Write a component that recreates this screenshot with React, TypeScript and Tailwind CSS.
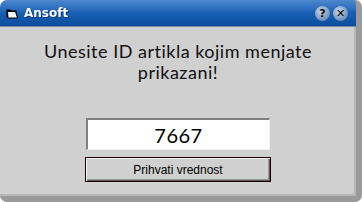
import React from "react";

function FolderIcon() {
  return (
    <svg width="12" height="11" viewBox="0 0 12 11" className="shrink-0">
      <path d="M0.5 1.5 H4 L5 2.5 H10.5 V9.5 H0.5 Z" fill="#000" />
      <path d="M1.5 3.5 H9.5 L11.5 10 H2 Z" fill="#fff" stroke="#000" strokeWidth="1" />
    </svg>
  );
}

function TitleButton({ children }: { children: React.ReactNode }) {
  return (
    <div className="w-[15px] h-[15px] rounded-full bg-[radial-gradient(circle_at_40%_35%,#c8d8ec,#6f8fb8_70%,#45628c)] flex items-center justify-center text-[11px] font-bold leading-none text-black font-['DejaVu_Sans',sans-serif]">
      {children}
    </div>
  );
}

export default function App() {
  return (
    <div className="w-[362px] h-[202px] bg-white overflow-hidden">
      <div className="w-full h-full flex flex-col rounded-t-[7px] rounded-b-[7px] overflow-hidden bg-[#d0d0d0] border-r-[6px] border-b-[6px] border-r-[#9a9a9a] border-b-[#9a9a9a] shadow-[inset_-2px_-2px_0_#b8b8b8]">
        <div className="h-[27px] shrink-0 flex items-center px-[6px] bg-gradient-to-b from-[#4d88d0] via-[#1860b4] to-[#0c4c9c] border-b border-[#7a8ca8]">
          <FolderIcon />
          <span className="ml-[6px] text-white font-bold text-[12px] font-['DejaVu_Sans',sans-serif] drop-shadow-[1px_1px_0_#0a3a78]">
            Ansoft
          </span>
          <div className="ml-auto flex gap-[3px] mr-[2px]">
            <TitleButton>?</TitleButton>
            <TitleButton>✕</TitleButton>
          </div>
        </div>
        <div className="flex-1 flex flex-col items-center">
          <p className="mt-[14px] text-center text-[18px] leading-[21px] text-[#101010] font-['Lato',sans-serif] tracking-[0.5px]">
            Unesite ID artikla kojim menjate
            <br />
            prikazani!
          </p>
          <div className="mt-[35px] w-[184px] h-[32px] bg-white border-t-2 border-l-2 border-t-[#808080] border-l-[#808080] border-b border-r border-b-[#f0f0f0] border-r-[#f0f0f0] flex items-center justify-center text-[20px] text-black font-['Lato',sans-serif] tracking-[0.5px]">
            7667
          </div>
          <button className="mt-[7px] w-[186px] h-[25px] border border-[#1a0000] bg-[#d0d0d0] shadow-[inset_1px_1px_0_#f4f4f4,inset_-1px_-1px_0_#5a5a5a,inset_-2px_-2px_0_#9a9a9a] text-[12px] text-black font-['Liberation_Sans',sans-serif]">
            Prihvati vrednost
          </button>
        </div>
      </div>
    </div>
  );
}
